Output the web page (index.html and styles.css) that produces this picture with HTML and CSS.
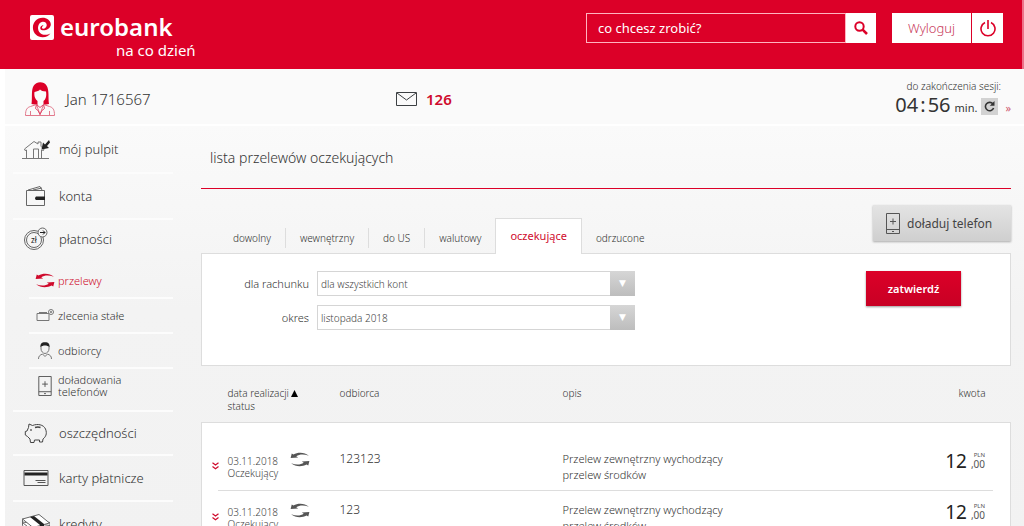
FILE: index.html
```html
<!DOCTYPE html>
<html lang="pl">
<head>
<meta charset="utf-8">
<title>eurobank – lista przelewów oczekujących</title>
<meta name="viewport" content="width=device-width, initial-scale=1">
<link rel="stylesheet" href="styles.css">
</head>
<body>
<svg class="sprite" aria-hidden="true">
  <symbol id="i-swap" viewBox="0 0 20 16">
    <path d="M0 6.500L1.200 1.500 3 2.600C8 0 15 .2 19.500 4 14 2 9.500 2.200 6 4.500L8 5.800z"/>
    <path d="M20 9.500l-1.200 5-1.800-1.100C12 16 5 15.800.5 12c5.500 2 10 1.800 13.500-.5L12 10.200z"/>
  </symbol>
  <symbol id="i-phone" viewBox="0 0 14 21">
    <path fill="none" stroke="currentColor" d="M.5.5h13v20H.5zM.5 16.500h13M7 5.500v6M4 8.500h6M6 18.500h2"/>
  </symbol>
  <symbol id="i-more" viewBox="0 0 7 8">
    <path fill="none" stroke="currentColor" stroke-width="1.200" d="M.5.7L3.500 3 6.500.7M.5 4.500l3 2.300 3-2.300"/>
  </symbol>
</svg>
<div class="page">
  <header class="top">
    <a class="brand" href="#">
      <span class="brand-name">
        <svg width="24" height="25" viewBox="0 0 24 25" aria-hidden="true">
          <rect width="24" height="25" rx="2" fill="#fff"/>
          <path fill="#dc0028" d="M12.500 15.200C16 15.600 20.800 13.500 20.800 9.200 20.500 5 16.500 2.600 12.500 2.700 6.800 2.800 2.800 7.400 2.900 12.800 3 18.500 7.500 22.400 12.800 22.300c3.400-.1 6-1.500 7.700-4.100-3.300 2.300-8.800 2.200-11.300-1.300C6.800 13.200 8.200 7.200 12.600 6.700c2.600-.2 4.400 1.500 4.100 3.900-.3 2-1.900 3.200-3.600 3.100-1-.1-1.500-1-.9-2 .4-.7 1-1 1.300-1.800-2 .3-3.600 1.900-3.200 3.500.2 1 1 1.600 2.200 1.800z"/>
        </svg>
        eurobank
      </span>
      <span class="brand-tag">na co dzień</span>
    </a>
    <div class="top-actions">
      <form class="search">
        <input type="text" placeholder="co chcesz zrobić?" aria-label="co chcesz zrobić?">
        <button type="button" aria-label="Szukaj">
          <svg width="14" height="14" viewBox="0 0 14 14" fill="none" stroke="#dc0028"><circle cx="5.500" cy="5.500" r="4.200" stroke-width="2"/><path stroke-width="2.600" d="M8.600 8.600l4.400 4.400"/></svg>
        </button>
      </form>
      <button class="logout" type="button">
        <span class="logout-text">Wyloguj</span>
        <span class="logout-icon">
          <svg width="16" height="17" viewBox="0 0 16 17" fill="none" stroke="#dc0028" stroke-width="1.600"><path d="M5 2.500a7 7 0 1 0 6 0M8 0v9"/></svg>
        </span>
      </button>
    </div>
  </header>

  <div class="shell">
    <div class="userbar">
      <div class="user">
        <svg width="30" height="34" viewBox="0 0 30 34" aria-hidden="true">
          <path fill="#dc0028" d="M6.500 22C7.500 16 6 8 8.500 4c2.500-5 10.500-5 13-.5C24.500 8 23 16 24 22l-5.500 1v-4c3-2 3-6 2.500-9.500-3 0-5-.9-6-2-1 1.400-3 2-5.500 2.500-.5 3 0 7 3 9v4z"/>
          <path fill="none" stroke="#e2798c" d="M.5 33.500c0-6 1.500-8 5-9l6-2 3.500 10 3.500-10 6 2c3.500 1 5 3 5 9zM5.500 33v-4M24.500 33v-4"/>
          <path fill="none" stroke="#e2496a" d="M11.500 22.500l-1 4 2.500 2 2 4 2-4 2.500-2-1-4M12 23l3 2.500 3-2.500"/>
        </svg>
        Jan 1716567
      </div>
      <a class="mail" href="#">
        <svg width="21" height="14" viewBox="0 0 21 14" fill="none" stroke="#3c4043" aria-hidden="true"><path d="M.5.5h20v13H.5zM1 1l9.500 7L20 1"/></svg>
        126
      </a>
      <div class="session">
        <div class="session-label">do zakończenia sesji:</div>
        <div class="session-time">
          <span class="clock">04<i>:</i>56</span> min.
          <button class="refresh" type="button" aria-label="Odśwież">
            <svg width="11" height="11" viewBox="0 0 11 11"><path fill="none" stroke="#333" stroke-width="1.600" d="M9 3a4.200 4.200 0 1 0 .6 4"/><path fill="#333" d="M10.500 0v4.800H5.800z"/></svg>
          </button>
          <a href="#">»</a>
        </div>
      </div>
    </div>

    <div class="columns">
      <nav class="menu">
        <a href="#"><svg width="28" height="20" viewBox="0 0 28 20" fill="none" stroke="#777"><path d="M0 19.500h27M4.500 19v-8L3 11.500l-.5-1.500L12 2.500l4 2.500v-2h3v4.500l3 2.500-.5 1.500-2-.5v8M11.500 19v-9h5v9"/><path fill="#222" stroke="none" d="M19.500 10.500l1.500-7 2 2L27 1l1 2.500-3 3.500 2 2z"/></svg>mój pulpit</a>
        <a href="#"><svg width="22" height="21" viewBox="0 0 22 21" fill="none" stroke="#666"><path d="M1.500 4.500h18v15h-18zM3 4L15 .5l2 3.500M8 4l9-2"/><path fill="#222" stroke="none" d="M11 10.500h9v3.500h-9q-2-1.700 0-3.500z"/></svg>konta</a>
        <a href="#"><svg width="25" height="24" viewBox="0 0 25 24" fill="none" stroke="#666"><circle cx="10.500" cy="13" r="9.500"/><circle cx="10.500" cy="13" r="7.500"/><circle cx="19" cy="5.500" r="4.500" fill="#f4f4f4"/><path stroke="#222" d="M16.500 5.500h5M19.500 3.500l2 2-2 2"/><text x="10.500" y="16" class="coin">zł</text></svg>płatności</a>
        <div class="submenu">
          <a class="active" href="#"><svg width="20" height="15" fill="#cf0a2c"><use href="#i-swap"/></svg>przelewy</a>
          <a href="#"><svg width="19" height="13" viewBox="0 0 19 13" fill="none" stroke="#777"><path d="M1.500 4.500h12v7h-12zM3.500 3.500h8"/><circle cx="15.500" cy="3" r="2.500" fill="#f3f3f3"/><path stroke="#333" d="M14.500 3h2"/></svg>zlecenia stałe</a>
          <a href="#"><svg width="14" height="17" viewBox="0 0 14 17" fill="none" stroke="#777"><path d="M3 4v3c0 2 2 4.500 4 4.500s4-2.500 4-4.500V4M.5 17c0-3 1.500-4 4-5L7 14.500 9.500 12c2.500 1 4 2 4 5"/><path fill="#222" stroke="none" d="M2.500 5C2 1 5 0 7 .300 9 0 12 1 11.500 5 9 3 5 3 2.500 5z"/></svg>odbiorcy</a>
          <a href="#"><svg class="dark" width="14" height="20"><use href="#i-phone"/></svg>doładowania telefonów</a>
        </div>
        <a href="#"><svg width="23" height="20" viewBox="0 0 23 20" fill="none" stroke="#444"><path d="M4 4.500L4.500 1 8 2.500C13 .5 19 1.500 21 6c2 5 0 8-2.500 10l-.5 3h-3v-2h-5l-.5 2.500H6L5.500 16 3 13.500.8 12V8.500L2.500 8z"/><path stroke-width="1.500" d="M10.500 4.500q3-1 5.500 0"/><circle cx="6.500" cy="7" r=".5"/></svg>oszczędności</a>
        <a href="#"><svg width="25" height="16" viewBox="0 0 25 16" fill="none" stroke="#555"><path d="M.5.5h24v15H.5zM12 10.500h10M14 12.500h8"/><path stroke="#222" stroke-width="3" d="M1 4h23"/></svg>karty płatnicze</a>
        <a href="#"><svg width="28" height="20" viewBox="0 0 28 20" fill="#fff" stroke="#666"><path d="M.5 8v3.500L11 20l17-4.500v-4zM.5 5v3.500L11 17l17-4.500v-4z"/><path d="M.5 5L17 .5 27.500 9 11 13.500z"/><path fill="#222" stroke="none" d="M8 3l4-1 10 8v7l-4 1v-7z"/></svg>kredyty</a>
      </nav>

      <main class="content">
        <h1>lista przelewów oczekujących</h1>
        <div class="tab-row">
          <div class="tabs">
            <a href="#">dowolny</a><a href="#">wewnętrzny</a><a href="#">do US</a><a href="#">walutowy</a><a class="current" href="#">oczekujące</a><a href="#">odrzucone</a>
          </div>
          <button class="topup" type="button"><svg class="dark" width="14" height="21"><use href="#i-phone"/></svg>doładuj telefon</button>
        </div>
        <form class="filters">
          <div class="fields">
            <label for="account">dla rachunku</label>
            <span class="select"><select id="account"><option>dla wszystkich kont</option></select></span>
            <label for="period">okres</label>
            <span class="select"><select id="period"><option>listopada 2018</option></select></span>
          </div>
          <button class="submit" type="button">zatwierdź</button>
        </form>
        <table class="transfers">
          <thead>
            <tr><th class="c-more"></th><th class="c-date">data realizacji<svg width="7" height="7" viewBox="0 0 7 7"><path d="M3.500 0L7 7H0z"/></svg><br>status</th><th class="c-who">odbiorca</th><th>opis</th><th class="c-sum">kwota</th></tr>
          </thead>
          <tbody>
            <tr>
              <td class="c-more"><svg width="7" height="8"><use href="#i-more"/></svg></td>
              <td><div class="when"><span>03.11.2018<br>Oczekujący</span><svg width="20" height="15" fill="#555"><use href="#i-swap"/></svg></div></td>
              <td>123123</td>
              <td class="desc">Przelew zewnętrzny wychodzący<br>przelew środków</td>
              <td class="c-sum"><div class="sum">12<span><small>PLN</small>,00</span></div></td>
            </tr>
            <tr>
              <td class="c-more"><svg width="7" height="8"><use href="#i-more"/></svg></td>
              <td><div class="when"><span>03.11.2018<br>Oczekujący</span><svg width="20" height="15" fill="#555"><use href="#i-swap"/></svg></div></td>
              <td>123</td>
              <td class="desc">Przelew zewnętrzny wychodzący<br>przelew środków</td>
              <td class="c-sum"><div class="sum">12<span><small>PLN</small>,00</span></div></td>
            </tr>
          </tbody>
        </table>
      </main>
    </div>
  </div>
</div>
</body>
</html>
```
FILE: styles.css
```css
* { box-sizing: border-box; }
body { margin: 0; background: #fff; color: #333; font-family: "Noto Sans", "Open Sans", sans-serif; font-size: 13px; font-weight: 300; }
a { color: inherit; text-decoration: none; }
button, input, select { font: inherit; margin: 0; border: 0; border-radius: 0; padding: 0; }
button { cursor: pointer; }
svg { flex: none; }
.sprite { display: none; }
.dark { color: #555; }
.page { height: 100vh; overflow: hidden; }

.top { display: flex; justify-content: space-between; align-items: flex-start; height: 69px; padding: 13px 19px 0 30px; background: #dc0028; border-right: 2px solid #ee7088; }
.brand { display: flex; flex-direction: column; color: #fff; }
.brand-name { display: flex; align-items: center; gap: 6px; font-size: 24px; line-height: 28px; font-weight: 600; }
.brand-tag { padding-left: 86px; font-size: 15px; line-height: 18px; font-weight: 400; }
.top-actions { display: flex; gap: 16px; }
.search { display: flex; height: 30px; }
.search input { width: 260px; padding: 0 11px; border: 1px solid #ffb3c0; background: transparent; color: #fff; font-size: 13px; font-weight: 400; }
.search input::placeholder { color: #fff; opacity: 1; }
.search button { display: flex; align-items: center; justify-content: center; width: 30px; background: #fff; }
.logout { display: flex; height: 30px; background: #fff; color: #c8385a; font-size: 13px; }
.logout-text { width: 80px; line-height: 30px; border-right: 1px solid #dc0028; }
.logout-icon { display: flex; align-items: center; justify-content: center; width: 31px; height: 30px; }

.shell { min-height: calc(100vh - 69px); margin-left: 5px; background: linear-gradient(#fafafa 0, #fafafa 56px, #f3f3f3 240px, #f2f2f2); }
.userbar { display: grid; grid-template-columns: 354px 1fr auto; align-items: center; height: 57px; padding: 4px 13px 0 20px; border-bottom: 2px solid #fff; }
.user { display: flex; align-items: center; gap: 11px; font-size: 15px; }
.mail { display: flex; align-items: center; gap: 9px; padding-left: 17px; color: #cf0a2c; font-size: 15px; font-weight: 600; }
.session { padding-top: 4px; }
.session-label { padding-right: 10px; text-align: right; font-size: 10px; line-height: 12px; }
.session-time { display: flex; align-items: baseline; gap: 4px; font-size: 11px; font-weight: 400; line-height: 26px; color: #333; }
.session-time a { padding-left: 3px; color: #cf5a70; }
.clock { font-size: 20px; }
.clock i { padding: 0 2px; font-style: normal; }
.refresh { display: flex; align-items: center; justify-content: center; align-self: center; width: 17px; height: 17px; background: #d2d2d2; }

.columns { display: flex; gap: 28px; }
.menu { flex: none; width: 160px; margin-left: 8px; font-size: 13px; }
.menu a { display: flex; align-items: center; height: 46px; padding-left: 46px; border-bottom: 2px solid #fcfcfc; }
.menu a svg { width: 28px; margin: 0 9px 0 -37px; }
.menu > a:first-child { height: 48px; }
.menu > a:nth-child(3) { height: 44px; padding-bottom: 6px; border: 0; }
.coin { font-size: 8px; font-weight: 400; text-anchor: middle; fill: #222; stroke: none; }
.submenu { padding-left: 16px; font-size: 11px; line-height: 12px; }
.submenu a { height: 35px; padding-left: 29px; }
.submenu a svg { width: 20px; margin: 0 3px 0 -23px; }
.submenu a:last-child { height: 41px; padding-bottom: 7px; border: 0; }
.submenu + a { border-top: 2px solid #fcfcfc; }
.submenu .active { color: #cf0a2c; }

.content { flex: 1; min-width: 0; margin-right: 13px; }
h1 { margin: 0; padding: 21px 9px 19px; border-bottom: 1px solid #dc0028; font-size: 14px; line-height: 22px; font-weight: 300; }
.tab-row { display: flex; justify-content: space-between; align-items: flex-end; padding: 16px 0 0 18px; }
.tabs { display: flex; align-items: flex-end; font-size: 10px; }
.tabs a { padding: 0 14px; border-right: 1px solid #ddd; line-height: 20px; margin-bottom: 5px; }
.tabs a:nth-child(4), .tabs a:last-child { border: 0; }
.tabs .current { z-index: 1; margin-bottom: -1px; border: 1px solid #ddd; border-bottom: 0; padding: 8px 14px 9px; background: #fff; color: #cf0a2c; line-height: 18px; font-size: 11px; font-weight: 400; }
.topup { display: flex; align-items: center; gap: 7px; width: 138px; height: 36px; margin-bottom: 12px; padding-left: 13px; background: linear-gradient(#e4e4e4, #cfcfcf); box-shadow: 0 1px 2px #aaa; color: #444; font-size: 12px; font-weight: 400; }
.filters { display: flex; justify-content: space-between; align-items: flex-start; height: 113px; padding: 17px 49px 0 16px; border: 1px solid #ddd; background: #fff; }
.fields { display: grid; grid-template-columns: 91px 318px; gap: 9px 8px; align-items: center; text-align: right; font-size: 11px; }
.select { position: relative; height: 25px; }
.select::after { content: "▼"; position: absolute; top: 0; right: 0; width: 25px; height: 25px; background: linear-gradient(#d6d6d6, #bdbdbd); color: #fff; font: 9px/25px "DejaVu Sans", sans-serif; text-align: center; pointer-events: none; }
.select select { display: block; width: 100%; height: 25px; padding: 0 3px; border: 1px solid #d5d5d5; background: #fff; color: #444; appearance: none; font-size: 10px; }
.submit { width: 95px; height: 35px; background: linear-gradient(#dc0028, #c80024); box-shadow: 0 1px 2px #999; color: #fff; font-size: 11px; font-weight: 600; }

.transfers { width: 100%; border-collapse: collapse; table-layout: fixed; }
th { height: 56px; padding: 21px 0 0; vertical-align: top; text-align: left; font-size: 10px; line-height: 13px; font-weight: 300; }
th svg { margin-left: 2px; }
.c-more { width: 26px; }
.c-date { width: 112px; }
.c-who { width: 223px; }
.transfers .c-sum { width: 112px; padding-right: 25px; text-align: right; }
tbody { border: 1px solid #ddd; background: #fff; }
tbody tr { background: linear-gradient(#ddd, #ddd) 16px 100% / calc(100% - 34px) 1px no-repeat; }
td { height: 51px; padding: 11px 0 8px; vertical-align: top; font-size: 12px; line-height: 16px; }
tbody tr:first-child td { height: 68px; padding-top: 28px; }
td.desc { font-size: 11px; }
td.c-more { padding-left: 10px; color: #cf0a2c; }
td.c-more svg { margin-top: 11px; }
.when { display: flex; gap: 12px; font-size: 10px; line-height: 12px; padding-top: 4px; color: #444; }
.when svg { margin-top: -3px; }
.sum { display: flex; justify-content: flex-end; gap: 4px; color: #222; font-size: 19px; line-height: 20px; font-weight: 400; }
.sum span { display: flex; flex-direction: column; text-align: right; font-size: 10px; line-height: 10px; color: #555; }
.sum small { font-size: 6px; line-height: 8px; }
```
